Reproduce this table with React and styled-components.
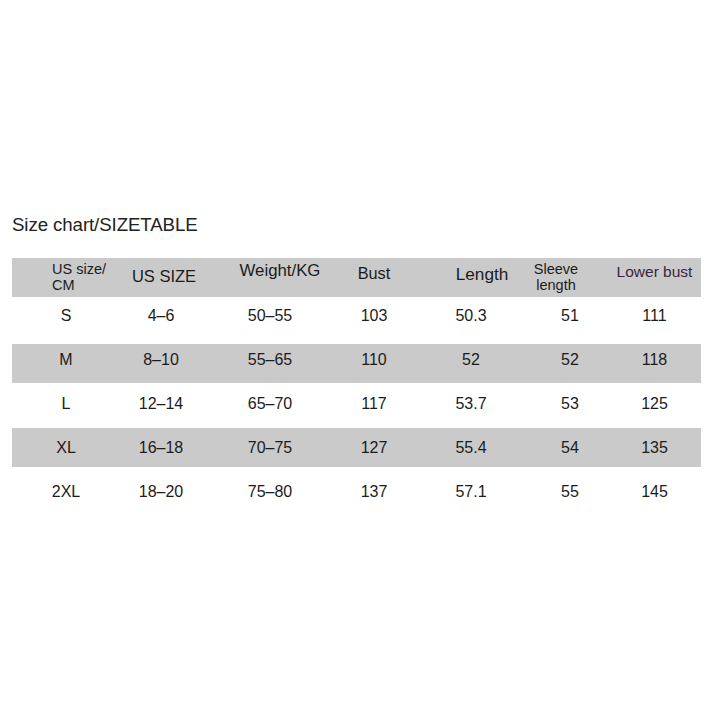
import React from "react";
import styled, { createGlobalStyle } from "styled-components";

const Global = createGlobalStyle`
  html, body { margin: 0; padding: 0; background: #ffffff; }
  body { font-family: "Liberation Sans", Arial, sans-serif; color: #1c1c1c; }
`;

const Page = styled.div`
  width: 715px;
  height: 715px;
  box-sizing: border-box;
  padding: 214px 14px 0 12px;
  background: #fff;
`;

const Title = styled.h1`
  margin: 0 0 22px 0;
  font-family: "Liberation Sans", Arial, sans-serif;
  font-weight: 400;
  font-size: 18.7px;
  line-height: 22px;
  color: #222;
  letter-spacing: -0.1px;
`;

const COLS = "108px 82px 136px 72px 122px 76px 93px";

const Row = styled.div`
  display: grid;
  grid-template-columns: ${COLS};
  height: ${(p) => p.$h}px;
  box-sizing: border-box;
  align-items: center;
  background: ${(p) => (p.$shade ? "#cacaca" : "transparent")};
  padding-top: ${(p) => p.$pt || 0}px;
  padding-bottom: ${(p) => p.$pb || 0}px;
`;

const HeadCell = styled.div`
  font-family: "Liberation Sans", Arial, sans-serif;
  font-size: ${(p) => p.$size || 16}px;
  line-height: ${(p) => p.$lh || 18}px;
  text-align: ${(p) => p.$align || "center"};
  padding-left: ${(p) => p.$pl || 0}px;
  padding-right: ${(p) => p.$pr || 0}px;
  padding-bottom: ${(p) => p.$pb || 0}px;
  color: ${(p) => p.$color || "#1c1c1c"};
  white-space: nowrap;
`;

const Cell = styled.div`
  font-family: "Liberation Sans", Arial, sans-serif;
  font-size: 16px;
  line-height: 18px;
  text-align: center;
  color: #1c1c1c;
`;

const rows = [
  { vals: ["S", "4–6", "50–55", "103", "50.3", "51", "111"], h: 47, shade: false, pb: 9 },
  { vals: ["M", "8–10", "55–65", "110", "52", "52", "118"], h: 39, shade: true, pb: 7 },
  { vals: ["L", "12–14", "65–70", "117", "53.7", "53", "125"], h: 45, shade: false, pb: 3 },
  { vals: ["XL", "16–18", "70–75", "127", "55.4", "54", "135"], h: 39, shade: true, pb: 0 },
  { vals: ["2XL", "18–20", "75–80", "137", "57.1", "55", "145"], h: 45, shade: false, pt: 5 },
];

export default function App() {
  return (
    <>
      <Global />
      <Page>
        <Title>Size chart/SIZETABLE</Title>
        <Row $h={39} $shade>
          <HeadCell $align="left" $pl={40} $size={14.5} $lh={15.5}>
            US size/
            <br />
            CM
          </HeadCell>
          <HeadCell $pl={6} $size={16.5} $pb={4}>US SIZE</HeadCell>
          <HeadCell $pl={20} $size={16.8} $pb={13}>Weight/KG</HeadCell>
          <HeadCell $size={16.3} $pb={9}>Bust</HeadCell>
          <HeadCell $pl={22} $size={17.2} $pb={7}>Length</HeadCell>
          <HeadCell $pr={28} $size={14.5} $lh={15.5}>
            Sleeve
            <br />
            length
          </HeadCell>
          <HeadCell $size={15.5} $pb={12} $color="#3a2642">Lower bust</HeadCell>
        </Row>
        {rows.map((r) => (
          <Row key={r.vals[0]} $h={r.h} $shade={r.shade} $pb={r.pb} $pt={r.pt}>
            {r.vals.map((v, i) => (
              <Cell key={i}>{v}</Cell>
            ))}
          </Row>
        ))}
      </Page>
    </>
  );
}
